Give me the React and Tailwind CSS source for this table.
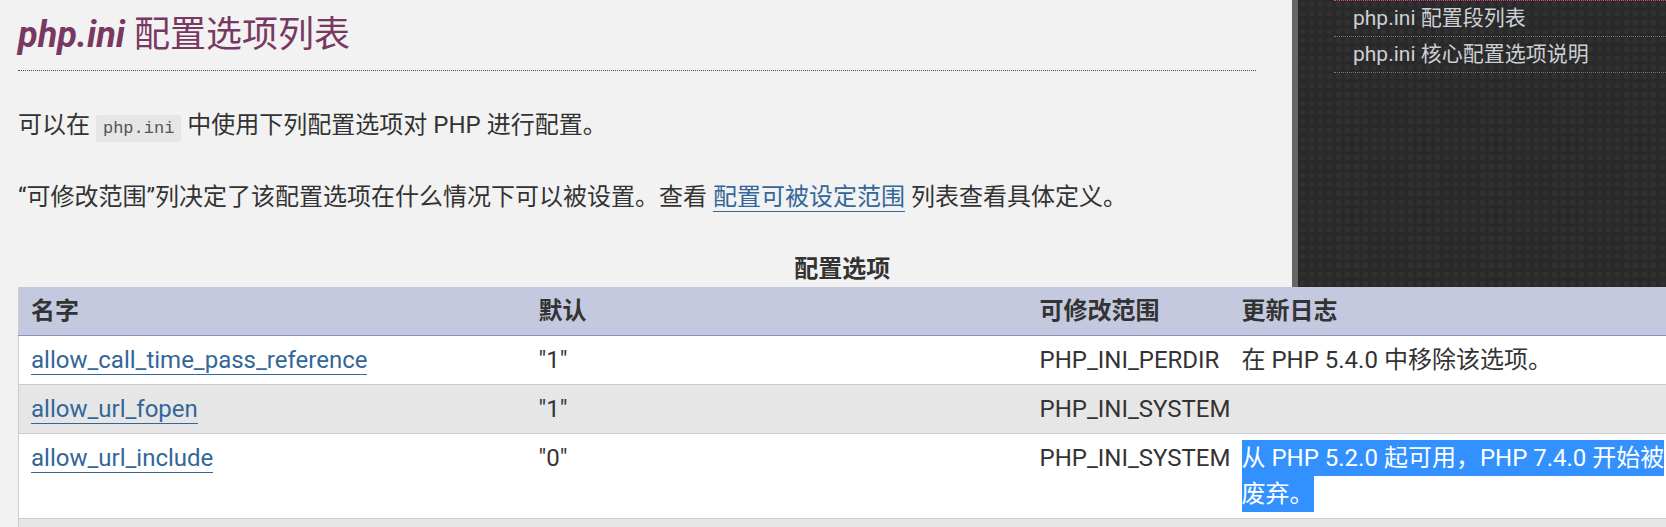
const rows = [
  { name: 'allow_call_time_pass_reference', def: '"1"', scope: 'PHP_INI_PERDIR', log: '在 PHP 5.4.0 中移除该选项。' },
  { name: 'allow_url_fopen', def: '"1"', scope: 'PHP_INI_SYSTEM', log: '' },
  { name: 'allow_url_include', def: '"0"', scope: 'PHP_INI_SYSTEM', log: '从 PHP 5.2.0 起可用，PHP 7.4.0 开始被废弃。', selected: true },
];

const sideLinks = ['php.ini 配置段列表', 'php.ini 核心配置选项说明'];

function Sidebar() {
  return (
    <aside className="absolute left-[1292px] top-0 h-[287px] w-[374px] border-l-[6px] border-[#666] bg-[#292929] bg-[image:radial-gradient(circle,#303030_45%,transparent_50%)] [background-size:9px_9px]">
      <ul className="ml-[36px] border-t border-dotted border-[#e0448f]">
        {sideLinks.map((label) => (
          <li key={label} className="border-b border-dotted border-[#777] pl-[19px] text-[21px] leading-[35px] text-[#ccd0d6]">
            {label}
          </li>
        ))}
      </ul>
    </aside>
  );
}

export default function App() {
  return (
    <div className="relative h-[527px] overflow-hidden bg-[#f2f2f2] font-['Roboto','Noto_Sans_CJK_SC',sans-serif] text-[24px] leading-[36px] text-[#333]">
      <Sidebar />

      <div className="relative w-[1256px] pl-[18px]">
        <h1 className="mt-[8px] border-b border-dotted border-[#793862] pb-[8px] text-[36px] font-normal leading-[54px] text-[#793862]">
          <em className="font-bold">php.ini</em> 配置选项列表
        </h1>

        <p className="mt-9">
          可以在{' '}
          <code className="rounded-[3px] bg-[#e6e6e6] px-[7px] py-[4px] font-['Liberation_Mono',monospace] text-[17px] leading-none text-[#555]">
            php.ini
          </code>{' '}
          中使用下列配置选项对 PHP 进行配置。
        </p>

        <p className="mt-9">
          “可修改范围”列决定了该配置选项在什么情况下可以被设置。查看{' '}
          <a className="border-b border-[#369] text-[#369]">配置可被设定范围</a> 列表查看具体定义。
        </p>
      </div>

      {/* table runs past the right edge of the window, as in the page */}
      <table className="relative ml-[18px] mt-[36px] w-[1664px] table-fixed border-collapse border-l border-[#ccc]">
        <caption className="pr-[16px] font-bold leading-[36px]">配置选项</caption>
        <colgroup>
          <col className="w-[508px]" />
          <col className="w-[501px]" />
          <col className="w-[202px]" />
          <col className="w-[453px]" />
        </colgroup>
        <thead>
          <tr className="border-b border-[#8892bf] bg-[#c4c9df] text-left">
            <th className="px-3 py-[6px] font-bold">名字</th>
            <th className="px-3 py-[6px] font-bold">默认</th>
            <th className="px-3 py-[6px] font-bold">可修改范围</th>
            <th className="px-3 py-[6px] font-bold">更新日志</th>
          </tr>
        </thead>
        <tbody>
          {rows.map((row, i) => (
            <tr key={row.name} className={`border-b border-[#ccc] align-top ${i % 2 === 1 ? 'bg-[#e6e6e6]' : 'bg-white'}`}>
              <td className="px-3 py-[6px]">
                <a className="border-b border-[#369] text-[#369]">{row.name}</a>
              </td>
              <td className="px-3 py-[6px]">{row.def}</td>
              <td className="px-3 py-[6px]">{row.scope}</td>
              <td className="px-3 py-[6px]">
                {row.selected ? (
                  <span className="bg-[#3390ff] py-[4px] text-white [box-decoration-break:clone]">{row.log}</span>
                ) : (
                  row.log
                )}
              </td>
            </tr>
          ))}
          <tr className="bg-[#e6e6e6]">
            <td className="h-[48px]" colSpan={4} />
          </tr>
        </tbody>
      </table>
    </div>
  );
}
